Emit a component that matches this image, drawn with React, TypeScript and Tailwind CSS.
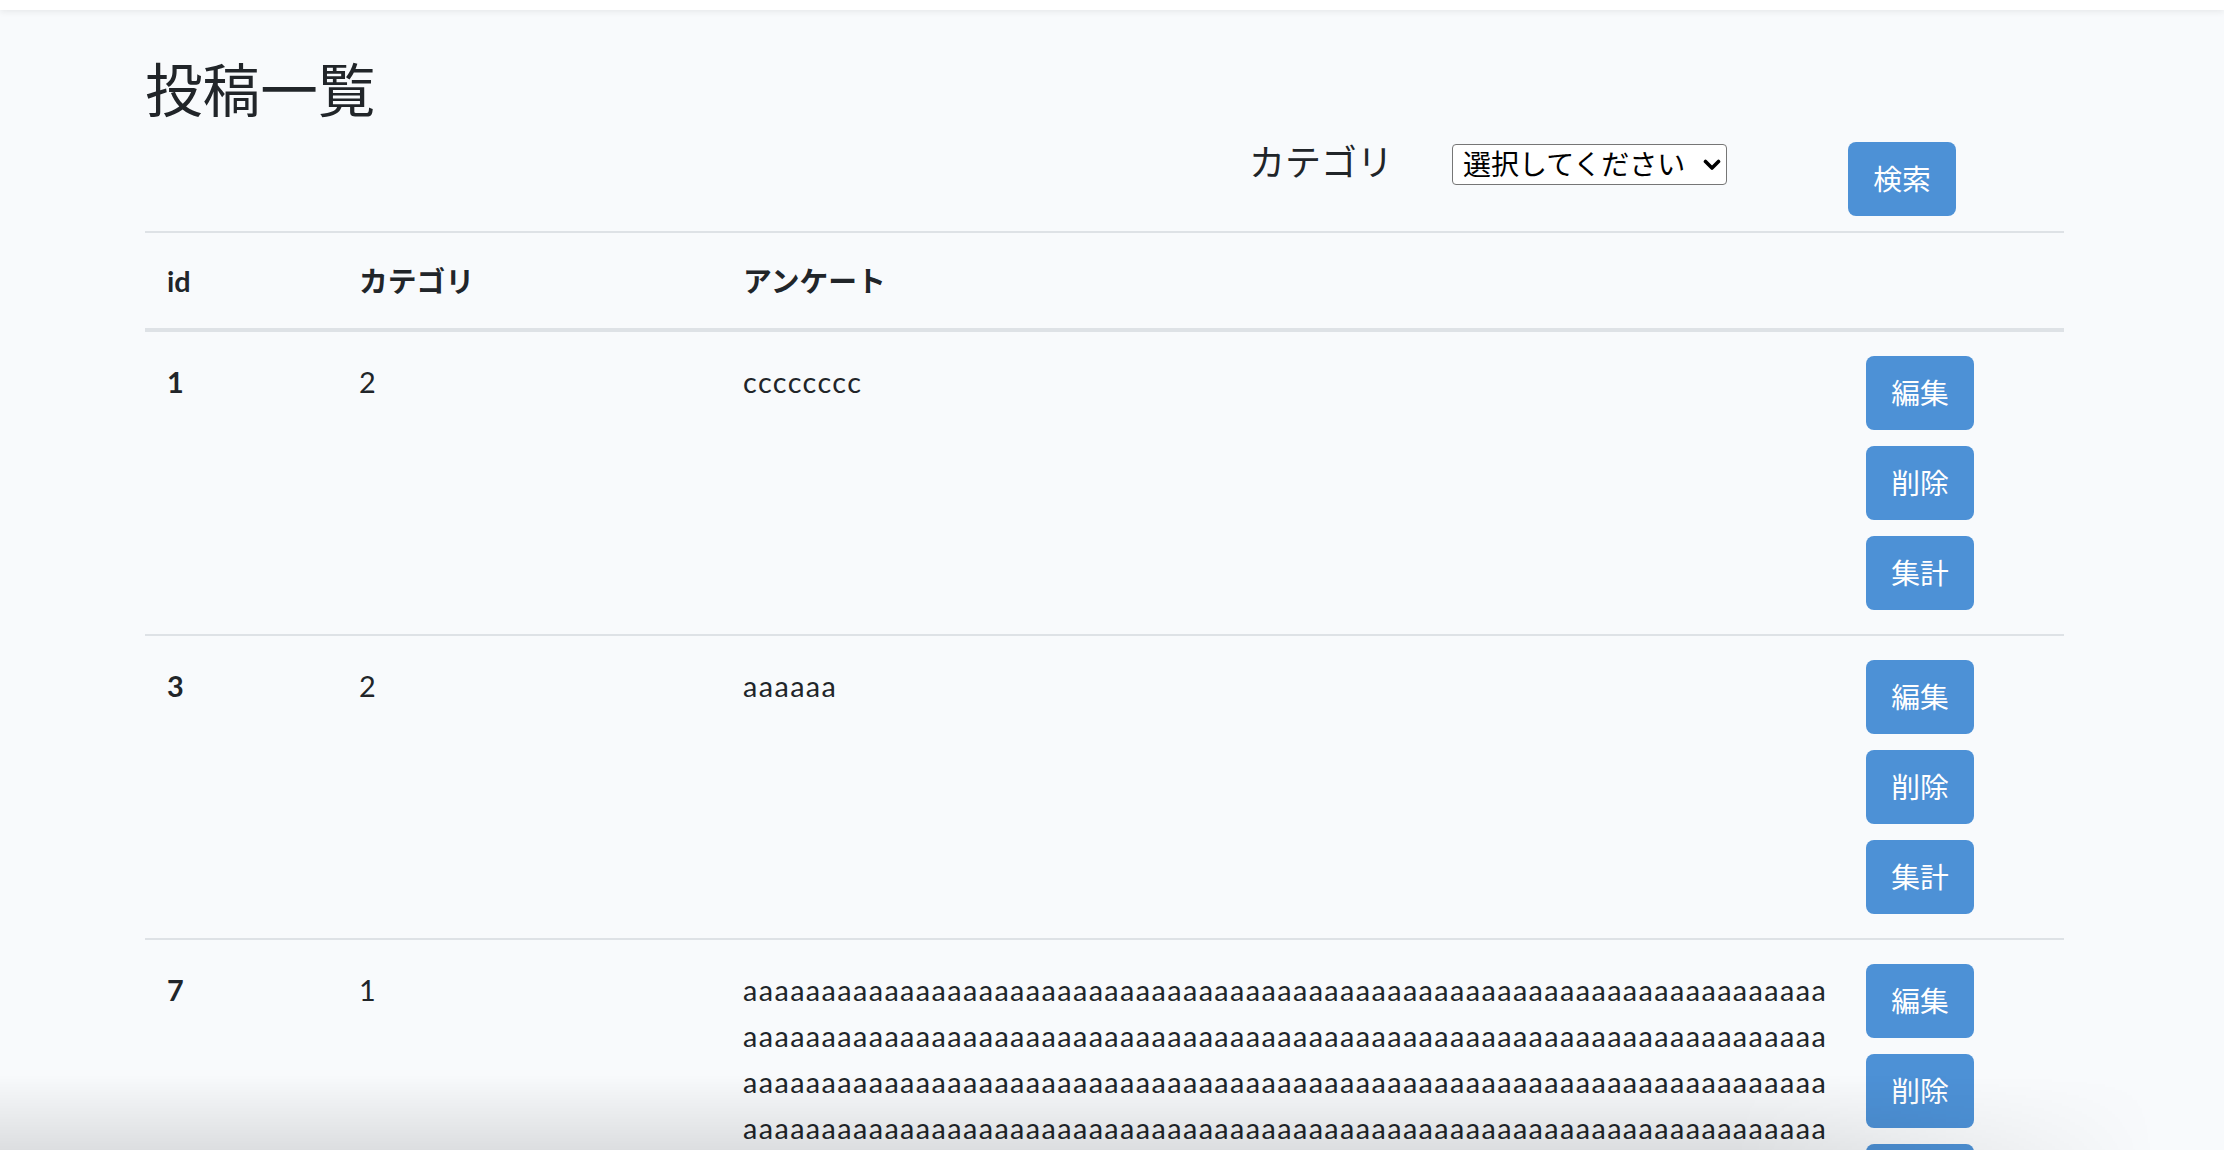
import { useState } from 'react';

interface Post {
  id: number;
  category: number;
  body: string;
}

const posts: Post[] = [
  { id: 1, category: 2, body: 'cccccccc' },
  { id: 3, category: 2, body: 'aaaaaa' },
  { id: 7, category: 1, body: 'a'.repeat(640) },
];

const btn =
  'flex h-[74px] w-[108px] items-center justify-center rounded-[8px] bg-[#4d91d6] text-[28.8px] leading-[46px] text-white';

const cell = 'border-t-2 border-[#dee2e6] pb-[21px] pl-[22px] pt-[27px] align-top text-[28.8px] leading-[46px]';

export default function App() {
  const [category, setCategory] = useState('');

  return (
    <div className="min-h-screen bg-[#f8fafc] font-['Lato','Noto_Sans_CJK_JP',sans-serif] text-[#212529]">
      <div className="h-[10px] bg-white shadow-[0_2px_6px_rgba(0,0,0,0.07)]" />

      <div className="ml-[145px] w-[1919px]">
        <h2 className="mt-[45px] text-[57.6px] font-normal leading-[1.2]">投稿一覧</h2>

        {/* search */}
        <form className="mt-[18px] flex items-start" onSubmit={(e) => e.preventDefault()}>
          <label className="ml-[1104px] text-[36px] leading-[41px]">カテゴリ</label>
          <div className="relative ml-[59px] mt-[2px]">
            <select
              value={category}
              onChange={(e) => setCategory(e.target.value)}
              className="h-[41px] w-[275px] appearance-none rounded-[4px] border border-[#767676] bg-white pl-[10px] text-[28px] leading-[39px] text-black"
            >
              <option value="">選択してください</option>
              <option value="1">1</option>
              <option value="2">2</option>
            </select>
            <svg
              className="pointer-events-none absolute right-[6px] top-[15px]"
              width="18"
              height="12"
              viewBox="0 0 18 12"
            >
              <path d="M2.5 2.5 L9 9 L15.5 2.5" fill="none" stroke="black" strokeWidth="3.6" strokeLinecap="round" strokeLinejoin="round" />
            </svg>
          </div>
          <button type="submit" className={`ml-[121px] ${btn}`}>
            検索
          </button>
        </form>

        {/* list */}
        <table className="mt-[15px] w-full table-fixed border-separate border-spacing-0">
          <colgroup>
            <col className="w-[192px]" />
            <col className="w-[384px]" />
            <col className="w-[1123px]" />
            <col />
          </colgroup>
          <thead>
            <tr>
              {['id', 'カテゴリ', 'アンケート', ''].map((h, i) => (
                <th
                  key={i}
                  className="border-b-2 border-t-2 border-[#dee2e6] pb-[24px] pl-[22px] pt-[25px] text-left align-bottom text-[28.8px] font-bold leading-[46px]"
                >
                  {h}
                </th>
              ))}
            </tr>
          </thead>
          <tbody>
            {posts.map((p) => (
              <tr key={p.id}>
                <th className={`${cell} text-left font-bold`}>{p.id}</th>
                <td className={cell}>{p.category}</td>
                <td className={`${cell} break-all pr-[2px] tracking-[1.4px]`}>{p.body}</td>
                <td className="border-t-2 border-[#dee2e6] pb-[24px] pl-[22px] pt-[24px] align-top">
                  <div className="flex flex-col gap-4">
                    <button className={btn}>編集</button>
                    <button className={btn}>削除</button>
                    <button className={btn}>集計</button>
                  </div>
                </td>
              </tr>
            ))}
          </tbody>
        </table>
      </div>

      {/* shadow at the bottom edge of the capture */}
      <div className="pointer-events-none fixed bottom-0 left-0 h-[75px] w-[2224px] bg-[linear-gradient(to_top,rgba(0,0,0,0.11),rgba(0,0,0,0))] [mask-image:linear-gradient(to_right,black_78%,transparent_97%)]" />
    </div>
  );
}
